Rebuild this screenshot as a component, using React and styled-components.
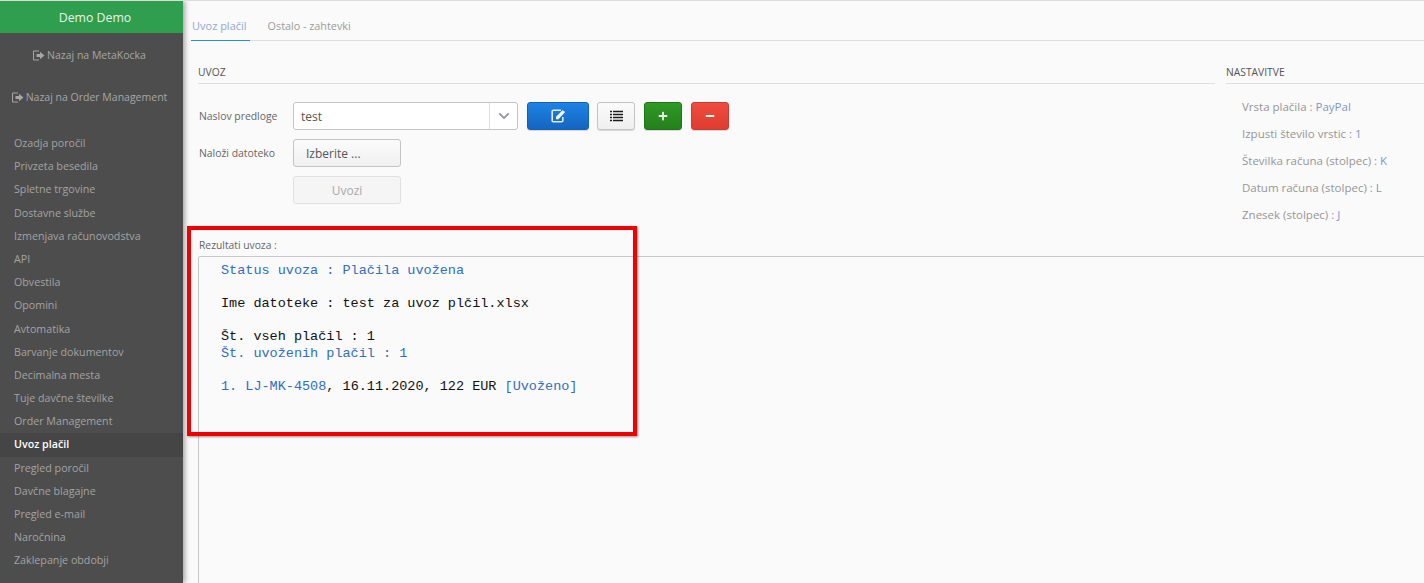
import React from "react";
import styled, { createGlobalStyle } from "styled-components";
import { FaPlus, FaMinus, FaChevronDown } from "react-icons/fa";

const GlobalStyle = createGlobalStyle`
  html, body {
    margin: 0;
    height: 100%;
    overflow: hidden;
    background: #fafafa;
    font-family: "Open Sans", sans-serif;
  }
  * { box-sizing: border-box; }
`;

// LAYOUT
const Page = styled.div`
  display: flex;
  height: 583px;
  width: 1424px;
  overflow: hidden;
  position: relative;
  border-top: 1px solid #dcdcdc;
`;

const Sidebar = styled.aside`
  width: 183px;
  flex-shrink: 0;
  background: #4d4d4d;
  box-shadow: 2px 0 5px rgba(0, 0, 0, 0.35);
  z-index: 1;
`;

const UserHeader = styled.div`
  height: 32px;
  background: #2f9e4f;
  color: #e8f5ec;
  font-size: 12.3px;
  line-height: 33px;
  text-align: center;
  padding-left: 7px;
`;

const BackLink = styled.div`
  display: flex;
  align-items: center;
  justify-content: center;
  gap: 2px;
  height: 42px;
  color: #a6a6a6;
  font-size: 10.5px;
  padding-right: ${(p) => p.$shift || 0}px;
`;

const BackLinks = styled.div`
  margin-top: 1px;
  margin-bottom: 14px;
`;

const NavItem = styled.div`
  height: 23.2px;
  line-height: 23.2px;
  padding-left: 14px;
  font-size: 10.7px;
  color: ${(p) => (p.$active ? "#ffffff" : "#a3a3a3")};
  font-weight: ${(p) => (p.$active ? 600 : 400)};
  background: ${(p) => (p.$active ? "#454545" : "transparent")};
`;

const Main = styled.main`
  flex: 1;
  min-width: 0;
  padding-left: 8px;
  display: flex;
  flex-direction: column;
`;

const Tabs = styled.div`
  display: flex;
  height: 40px;
  padding-top: 17px;
  border-bottom: 1px solid #dedede;
`;

const Tab = styled.div`
  font-size: ${(p) => (p.$active ? 11 : 10.8)}px;
  height: 23px;
  padding: 0 3px 0 ${(p) => (p.$active ? 1 : 0)}px;
  margin-right: ${(p) => (p.$active ? 18 : 0)}px;
  color: ${(p) => (p.$active ? "#8fa9d6" : "#9a9a9a")};
  border-bottom: ${(p) => (p.$active ? "1px solid #2a8ae0" : "none")};
`;

const Columns = styled.div`
  display: flex;
  padding: 23px 0 0 7px;
  gap: 11px;
  height: 197px;
`;

const LeftColumn = styled.section`
  width: 1017px;
`;

const RightColumn = styled.section`
  flex: 1;
`;

const SectionTitle = styled.div`
  height: 20px;
  font-size: 10.3px;
  line-height: 16px;
  color: #555;
  border-bottom: 1px solid #dedede;
`;

const FormRow = styled.div`
  display: flex;
  align-items: center;
  height: 28px;
  margin-top: ${(p) => p.$top}px;
`;

const FieldLabel = styled.label`
  width: 95px;
  flex-shrink: 0;
  padding-left: 1px;
  font-size: 10.4px;
  color: #666;
`;

const SelectBox = styled.div`
  display: flex;
  width: 225px;
  height: 28px;
  background: #fff;
  border: 1px solid #c4c4c4;
  border-radius: 3px;
  font-size: 12px;
  color: #555;
  margin-right: 9px;
`;

const SelectValue = styled.div`
  flex: 1;
  padding-left: 7px;
  line-height: 28px;
`;

const SelectArrow = styled.div`
  width: 28px;
  border-left: 1px solid #dcdcdc;
  display: flex;
  align-items: center;
  justify-content: center;
  color: #9a9aa0;
  font-size: 12px;
`;

const IconButton = styled.button`
  display: flex;
  align-items: center;
  justify-content: center;
  width: ${(p) => p.$width}px;
  height: 28px;
  padding: 0;
  margin-right: ${(p) => p.$gap}px;
  font-size: ${(p) => p.$size || 12}px;
  color: ${(p) => p.$color};
  background: linear-gradient(${(p) => p.$from}, ${(p) => p.$to});
  border: 1px solid ${(p) => p.$border};
  border-radius: 3px;
  box-shadow: 0 1px 1px rgba(0, 0, 0, 0.15);
`;

const PlainButton = styled.button`
  width: 108px;
  height: 28px;
  padding: 0 0 0 ${(p) => (p.$left ? 12 : 0)}px;
  text-align: ${(p) => (p.$left ? "left" : "center")};
  font-family: inherit;
  font-size: 12px;
  color: ${(p) => (p.disabled ? "#aaa" : "#555")};
  background: ${(p) => (p.disabled ? "#f5f5f5" : "linear-gradient(#fbfbfb, #f0f0f0)")};
  border: 1px solid ${(p) => (p.disabled ? "#e0e0e0" : "#c4c4c4")};
  border-radius: 3px;
`;

const Setting = styled.div`
  height: 27px;
  line-height: 27px;
  padding-left: 16px;
  font-size: 11.5px;
  color: #969696;
  white-space: nowrap;
`;

const SettingValue = styled.span`
  color: #7f97c9;
`;

const SettingsList = styled.div`
  padding-top: 9px;
`;

const ResultLabel = styled.div`
  margin-left: 8px;
  height: 18px;
  font-size: 10.3px;
  line-height: 15px;
  color: #666;
`;

const ResultBox = styled.div`
  flex: 1;
  margin: 0 -5px -5px 7px;
  padding: 6px 0 0 22px;
  border: 1px solid #c8c8c8;
  border-radius: 2px;
  font-family: "Liberation Mono", monospace;
  font-size: 13.5px;
  line-height: 16.5px;
  color: #111;
`;

const ResultLine = styled.div`
  height: 16.5px;
  white-space: pre;
  color: ${(p) => (p.$blue ? "#2f6fbd" : "#111")};
`;

const Blue = styled.span`
  color: #2f6fbd;
`;

// annotation drawn over the screenshot
const Highlight = styled.div`
  position: absolute;
  left: 187px;
  top: 225px;
  width: 450px;
  height: 210px;
  border: 4px solid #f00000;
  box-shadow: 1px 1px 2px rgba(0, 0, 0, 0.4);
  z-index: 2;
`;

const ExitIcon = () => (
  <svg width="13" height="11" viewBox="0 0 13 11">
    <path d="M7 1H1.5v9H7" fill="none" stroke="#a6a6a6" strokeWidth="1" />
    <path d="M4.5 4h3.5V1.8L12.5 5.5 8 9.2V7H4.5z" fill="#a6a6a6" />
  </svg>
);

const EditIcon = () => (
  <svg width="15" height="14" viewBox="0 0 15 14">
    <path d="M10 1.2H2.2a1 1 0 0 0-1 1v9.6a1 1 0 0 0 1 1h8.6a1 1 0 0 0 1-1V8" fill="none" stroke="#dfeafa" strokeWidth="1.6" />
    <path d="M5 10.2V7.8L11.6 1.2 14.2 3 7.4 10.2z" fill="#f2f6fd" />
  </svg>
);

const ListIcon = () => (
  <svg width="13" height="12" viewBox="0 0 13 12">
    <path d="M0 1.5h2M3 1.5h10M0 4.5h2M3 4.5h10M0 7.5h2M3 7.5h10M0 10.5h2M3 10.5h10" stroke="#1c1c1c" strokeWidth="1.6" />
  </svg>
);

const NAV_ITEMS = [
  "Ozadja poročil",
  "Privzeta besedila",
  "Spletne trgovine",
  "Dostavne službe",
  "Izmenjava računovodstva",
  "API",
  "Obvestila",
  "Opomini",
  "Avtomatika",
  "Barvanje dokumentov",
  "Decimalna mesta",
  "Tuje davčne številke",
  "Order Management",
  "Uvoz plačil",
  "Pregled poročil",
  "Davčne blagajne",
  "Pregled e-mail",
  "Naročnina",
  "Zaklepanje obdobji",
];

const SETTINGS = [
  ["Vrsta plačila : ", "PayPal"],
  ["Izpusti število vrstic : ", "1"],
  ["Številka računa (stolpec) : ", "K"],
  ["Datum računa (stolpec) : ", "L"],
  ["Znesek (stolpec) : ", "J"],
];

const App = () => (
  <Page>
    <GlobalStyle />
    <Sidebar>
      <UserHeader>Demo Demo</UserHeader>
      <BackLinks>
        <BackLink $shift={5}><ExitIcon /> Nazaj na MetaKocka</BackLink>
        <BackLink $shift={5}><ExitIcon /> Nazaj na Order Management</BackLink>
      </BackLinks>
      {NAV_ITEMS.map((item) => (
        <NavItem key={item} $active={item === "Uvoz plačil"}>{item}</NavItem>
      ))}
    </Sidebar>
    <Main>
      <Tabs>
        <Tab $active>Uvoz plačil</Tab>
        <Tab>Ostalo - zahtevki</Tab>
      </Tabs>
      <Columns>
        <LeftColumn>
          <SectionTitle>UVOZ</SectionTitle>
          <FormRow $top={18}>
            <FieldLabel>Naslov predloge</FieldLabel>
            <SelectBox>
              <SelectValue>test</SelectValue>
              <SelectArrow><FaChevronDown /></SelectArrow>
            </SelectBox>
            <IconButton $width={62} $gap={8} $color="#e6f0fb" $from="#1e83e4" $to="#1465c0" $border="#1261b4">
              <EditIcon />
            </IconButton>
            <IconButton $width={38} $gap={9} $color="#222" $from="#fbfbfb" $to="#efefef" $border="#c4c4c4">
              <ListIcon />
            </IconButton>
            <IconButton $width={38} $gap={9} $size={10} $color="#e8f5e4" $from="#2f9a26" $to="#24801c" $border="#217519">
              <FaPlus />
            </IconButton>
            <IconButton $width={38} $gap={0} $size={10} $color="#fff" $from="#ef4b3f" $to="#df3d31" $border="#c93a30">
              <FaMinus />
            </IconButton>
          </FormRow>
          <FormRow $top={9}>
            <FieldLabel>Naloži datoteko</FieldLabel>
            <PlainButton $left>Izberite ...</PlainButton>
          </FormRow>
          <FormRow $top={9}>
            <FieldLabel />
            <PlainButton disabled>Uvozi</PlainButton>
          </FormRow>
        </LeftColumn>
        <RightColumn>
          <SectionTitle>NASTAVITVE</SectionTitle>
          <SettingsList>
            {SETTINGS.map(([label, value]) => (
              <Setting key={label}>{label}<SettingValue>{value}</SettingValue></Setting>
            ))}
          </SettingsList>
        </RightColumn>
      </Columns>
      <ResultLabel>Rezultati uvoza :</ResultLabel>
      <ResultBox>
        <ResultLine $blue>Status uvoza : Plačila uvožena</ResultLine>
        <ResultLine> </ResultLine>
        <ResultLine>Ime datoteke : test za uvoz plčil.xlsx</ResultLine>
        <ResultLine> </ResultLine>
        <ResultLine>Št. vseh plačil : 1</ResultLine>
        <ResultLine $blue>Št. uvoženih plačil : 1</ResultLine>
        <ResultLine> </ResultLine>
        <ResultLine><Blue>1. LJ-MK-4508</Blue>, 16.11.2020, 122 EUR <Blue>[Uvoženo]</Blue></ResultLine>
      </ResultBox>
    </Main>
    <Highlight />
  </Page>
);

export default App;
